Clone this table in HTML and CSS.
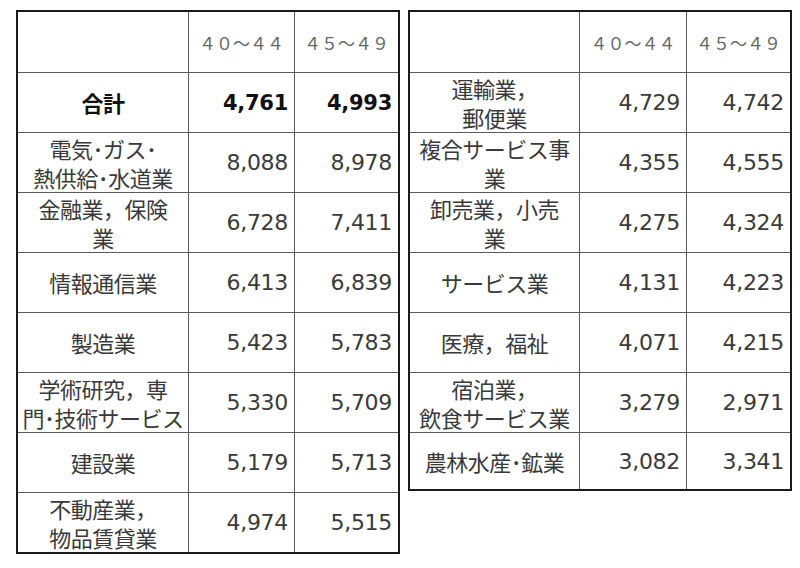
FILE: index.html
```html
<!DOCTYPE html>
<html lang="ja">
<head>
<meta charset="utf-8">
<title>産業別</title>
<link rel="stylesheet" href="styles.css">
</head>
<body>
<div class="page">
  <table class="tbl left">
    <colgroup><col class="c1"><col class="c2"><col class="c3"></colgroup>
    <tr class="head"><td></td><td class="h">４０～４４</td><td class="h">４５～４９</td></tr>
    <tr class="total"><td class="lab">合計</td><td class="num">4,761</td><td class="num">4,993</td></tr>
    <tr><td class="lab two">電気･ガス･<br>熱供給･水道業</td><td class="num">8,088</td><td class="num">8,978</td></tr>
    <tr><td class="lab two">金融業，保険<br>業</td><td class="num">6,728</td><td class="num">7,411</td></tr>
    <tr><td class="lab">情報通信業</td><td class="num">6,413</td><td class="num">6,839</td></tr>
    <tr><td class="lab">製造業</td><td class="num">5,423</td><td class="num">5,783</td></tr>
    <tr><td class="lab two">学術研究，専<br>門･技術サービス</td><td class="num">5,330</td><td class="num">5,709</td></tr>
    <tr><td class="lab">建設業</td><td class="num">5,179</td><td class="num">5,713</td></tr>
    <tr class="last"><td class="lab two">不動産業，<br>物品賃貸業</td><td class="num">4,974</td><td class="num">5,515</td></tr>
  </table>
  <table class="tbl right">
    <colgroup><col class="r1"><col class="r2"><col class="r3"></colgroup>
    <tr class="head"><td></td><td class="h">４０～４４</td><td class="h">４５～４９</td></tr>
    <tr><td class="lab two">運輸業，<br>郵便業</td><td class="num">4,729</td><td class="num">4,742</td></tr>
    <tr><td class="lab two">複合サービス事<br>業</td><td class="num">4,355</td><td class="num">4,555</td></tr>
    <tr><td class="lab two">卸売業，小売<br>業</td><td class="num">4,275</td><td class="num">4,324</td></tr>
    <tr><td class="lab">サービス業</td><td class="num">4,131</td><td class="num">4,223</td></tr>
    <tr><td class="lab">医療，福祉</td><td class="num">4,071</td><td class="num">4,215</td></tr>
    <tr><td class="lab two">宿泊業，<br>飲食サービス業</td><td class="num">3,279</td><td class="num">2,971</td></tr>
    <tr class="last short"><td class="lab">農林水産･鉱業</td><td class="num">3,082</td><td class="num">3,341</td></tr>
  </table>
</div>
</body>
</html>
```

FILE: styles.css
```css
html, body {
  margin: 0;
  padding: 0;
  background: #ffffff;
}

.page {
  display: flex;
  align-items: flex-start;
  gap: 8px;
  padding: 10px 0 0 16px;
}

.tbl {
  border-collapse: separate;
  border-spacing: 0;
  table-layout: fixed;
  width: 384px;
  border: 2px solid #1a1a1a;
  background: #ffffff;
  color: #3a3a3a;
  font-family: "Noto Sans CJK JP", "DejaVu Sans", sans-serif;
}

.c1 { width: 171px; }
.c2 { width: 106px; }
.c3 { width: 103px; }
.r1 { width: 170px; }
.r2 { width: 107px; }
.r3 { width: 103px; }

.tbl td {
  box-sizing: border-box;
  height: 60px;
  padding: 0;
  border-right: 1px solid #5a5a5a;
  border-bottom: 1px solid #5a5a5a;
  vertical-align: middle;
  overflow: hidden;
  white-space: nowrap;
}

.tbl td:last-child { border-right: none; }
.tbl tr.last td { border-bottom: none; height: 58px; }
.tbl tr.last.short td { height: 56px; }
.tbl tr.head td { height: 61px; }

.h {
  text-align: center;
  font-size: 17px;
  color: #666666;
}

.lab {
  text-align: center;
  font-size: 22px;
  line-height: 29px;
  letter-spacing: -0.5px;
}

.lab.two { padding-top: 1px; }

.num {
  text-align: right;
  padding-right: 6px !important;
  font-family: "DejaVu Sans", "Liberation Sans", sans-serif;
  font-size: 22px;
  letter-spacing: -0.3px;
}

.total td {
  font-weight: bold;
  color: #111111;
}

.total .num { font-size: 21px; }
```
